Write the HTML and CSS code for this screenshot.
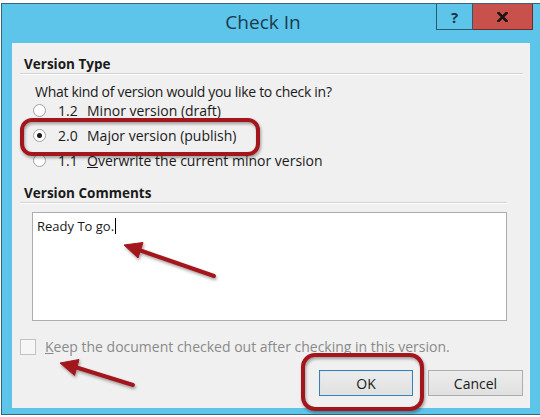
FILE: index.html
```html
<!DOCTYPE html>
<html lang="en">
<head>
    <meta charset="UTF-8">
    <title>Check In</title>
    <link rel="stylesheet" href="styles.css">
</head>
<body>
    <div class="window">
        <div class="titlebar">
            <div class="title">Check In</div>
            <div class="title-btn help">?</div>
            <div class="title-btn close">
                <svg width="11" height="10" viewBox="0 0 11 10">
                    <path d="M1.5 1 L9.5 9 M9.5 1 L1.5 9" stroke="#1a1414" stroke-width="2.6" stroke-linecap="square"/>
                </svg>
            </div>
        </div>
        <div class="panel">
            <div class="group-title">Version Type</div>
            <p class="question">What kind of version would you like to check in?</p>
            <div class="radio-row">
                <span class="radio"></span>
                <span class="num">1.2</span>
                <span>Minor version (draft)</span>
            </div>
            <div class="radio-row">
                <span class="radio checked"></span>
                <span class="num">2.0</span>
                <span>Ma<u>j</u>or version (publish)</span>
            </div>
            <div class="radio-row">
                <span class="radio"></span>
                <span class="num">1.1</span>
                <span><u>O</u>verwrite the current minor version</span>
            </div>

            <div class="group-title comments-title">Version Comments</div>
            <div class="comment-box">Ready To go.<span class="caret"></span></div>

            <div class="check-row">
                <span class="checkbox"></span>
                <span class="check-label"><u>K</u>eep the document checked out after checking in this version.</span>
            </div>

            <div class="buttons">
                <button class="btn default">OK</button>
                <button class="btn">Cancel</button>
            </div>
        </div>
    </div>

    <svg class="annotations" width="540" height="417" viewBox="0 0 540 417">
        <defs>
            <filter id="shadow" x="-20%" y="-20%" width="140%" height="160%">
                <feDropShadow dx="1" dy="2" stdDeviation="1.5" flood-color="#000" flood-opacity="0.35"/>
            </filter>
        </defs>
        <g fill="none" stroke="#a3191f" stroke-width="4" filter="url(#shadow)">
            <rect x="22" y="120" width="236" height="34" rx="10"/>
            <rect x="303" y="355" width="119" height="54" rx="12"/>
        </g>
        <g fill="#a3191f" stroke="#a3191f" filter="url(#shadow)">
            <line x1="214" y1="276" x2="139" y2="250" stroke-width="4" stroke-linecap="round"/>
            <polygon points="124,245 143,242.5 138,258" stroke-width="1" stroke-linejoin="round"/>
            <line x1="133" y1="385" x2="75" y2="367" stroke-width="4" stroke-linecap="round"/>
            <polygon points="60,363 79,359.5 74.5,375.5" stroke-width="1" stroke-linejoin="round"/>
        </g>
    </svg>
</body>
</html>
```

FILE: styles.css
```css
html, body {
    margin: 0;
    background-color: #ffffff;
}
body {
    position: relative;
    width: 540px;
    height: 417px;
    overflow: hidden;
    font-family: 'Open Sans', 'Noto Sans', sans-serif;
    font-size: 14px;
    color: #1a1a1a;
}
.window {
    box-sizing: border-box;
    margin: 3px 0 0 1px;
    height: 412px;
    border: 1px solid #35657b;
    border-right: none;
    background-color: #5dc5ea;
    display: flex;
    flex-direction: column;
}
.titlebar {
    height: 39px;
    display: flex;
    align-items: flex-start;
    padding-right: 7px;
}
.title {
    flex: 1;
    padding-left: 88px;
    text-align: center;
    font-size: 19px;
    line-height: 36px;
    color: #1a3a4e;
}
.title-btn {
    box-sizing: border-box;
    height: 26px;
    display: flex;
    align-items: center;
    justify-content: center;
    font-weight: bold;
    color: #1b1b1b;
}
.help {
    width: 37px;
    border: 1px solid #2b5a70;
    border-top: none;
    font-size: 15px;
    color: #17324a;
}
.close {
    width: 60px;
    background-color: #c9514b;
    border-bottom: 1px solid #6e2b28;
    border-right: 1px solid #6e2b28;
}
.panel {
    height: 365px;
    margin: 0 10px 0 10px;
    background-color: #f0f0f0;
    display: flex;
    flex-direction: column;
}
.group-title {
    margin: 12px 7px 0 8px;
    padding-left: 4px;
    font-size: 13.5px;
    font-weight: bold;
    line-height: 18px;
    border-bottom: 1px solid #d4d4d4;
    box-shadow: 0 1px 0 #ffffff;
}
.question {
    margin: 10px 0 0 23px;
    line-height: 16px;
    letter-spacing: -0.3px;
}
.radio-row {
    height: 25px;
    display: flex;
    align-items: center;
    padding-left: 21px;
}
.question + .radio-row {
    margin-top: -2px;
}
.radio {
    box-sizing: border-box;
    width: 13px;
    height: 13px;
    border: 1px solid #a2a2a2;
    border-radius: 50%;
    background-color: #ffffff;
    margin-right: 12px;
    display: flex;
    align-items: center;
    justify-content: center;
}
.radio.checked::after {
    content: "";
    width: 5px;
    height: 5px;
    border-radius: 50%;
    background-color: #1b1b1b;
}
.num {
    width: 29px;
}
.comments-title {
    margin-top: 11px;
    margin-right: 23px;
}
.comment-box {
    box-sizing: border-box;
    margin: 9px 0 0 20px;
    width: 475px;
    height: 109px;
    padding: 4px;
    font-size: 13px;
    line-height: 18px;
    background-color: #ffffff;
    border: 1px solid #abadb3;
}
.caret {
    display: inline-block;
    width: 1px;
    height: 16px;
    margin-left: 1px;
    vertical-align: -3px;
    background-color: #000000;
}
.check-row {
    margin: 18px 0 0 8px;
    display: flex;
    align-items: center;
    gap: 9px;
}
.checkbox {
    box-sizing: border-box;
    width: 16px;
    height: 16px;
    border: 1px solid #c2c2c2;
    background-color: #f6f6f6;
}
.check-label {
    color: #8a8a8a;
    line-height: 16px;
}
.buttons {
    margin-top: 15px;
    padding-right: 7px;
    display: flex;
    justify-content: flex-end;
    gap: 15px;
}
.btn {
    box-sizing: border-box;
    width: 95px;
    height: 26px;
    font-family: 'Open Sans', 'Noto Sans', sans-serif;
    font-size: 14px;
    color: #1a1a1a;
    background: linear-gradient(#ececec, #e0e0e0);
    border: 1px solid #adadad;
    padding: 0;
}
.btn.default {
    width: 94px;
    border-color: #3c7fb1;
    box-shadow: inset 0 0 0 1px #d8e6f0;
}
.annotations {
    position: absolute;
    top: 0;
    left: 0;
    pointer-events: none;
}
```
